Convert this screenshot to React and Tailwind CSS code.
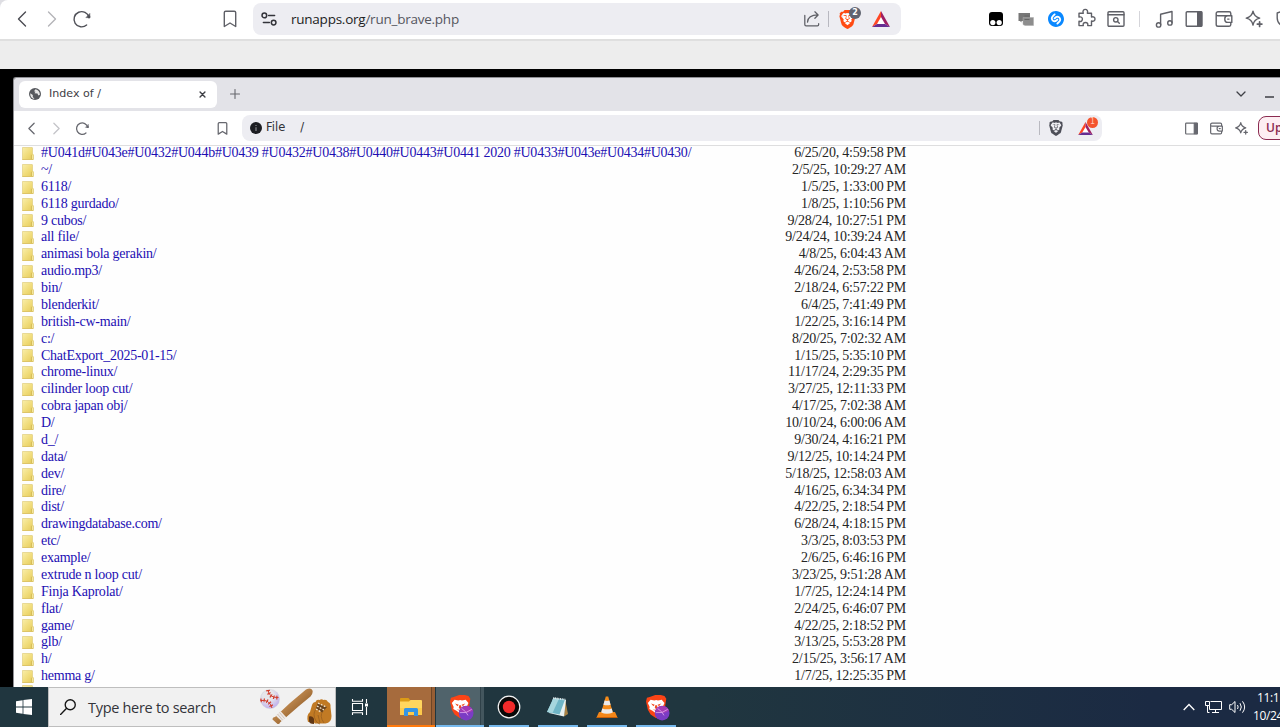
import { SiBrave, SiShazam } from "react-icons/si";

const files = [
  ["#U041d#U043e#U0432#U044b#U0439 #U0432#U0438#U0440#U0443#U0441 2020 #U0433#U043e#U0434#U0430/", "6/25/20, 4:59:58", "PM"],
  ["~/", "2/5/25, 10:29:27", "AM"],
  ["6118/", "1/5/25, 1:33:00", "PM"],
  ["6118 gurdado/", "1/8/25, 1:10:56", "PM"],
  ["9 cubos/", "9/28/24, 10:27:51", "PM"],
  ["all file/", "9/24/24, 10:39:24", "AM"],
  ["animasi bola gerakin/", "4/8/25, 6:04:43", "AM"],
  ["audio.mp3/", "4/26/24, 2:53:58", "PM"],
  ["bin/", "2/18/24, 6:57:22", "PM"],
  ["blenderkit/", "6/4/25, 7:41:49", "PM"],
  ["british-cw-main/", "1/22/25, 3:16:14", "PM"],
  ["c:/", "8/20/25, 7:02:32", "AM"],
  ["ChatExport_2025-01-15/", "1/15/25, 5:35:10", "PM"],
  ["chrome-linux/", "11/17/24, 2:29:35", "PM"],
  ["cilinder loop cut/", "3/27/25, 12:11:33", "PM"],
  ["cobra japan obj/", "4/17/25, 7:02:38", "AM"],
  ["D/", "10/10/24, 6:00:06", "AM"],
  ["d_/", "9/30/24, 4:16:21", "PM"],
  ["data/", "9/12/25, 10:14:24", "PM"],
  ["dev/", "5/18/25, 12:58:03", "AM"],
  ["dire/", "4/16/25, 6:34:34", "PM"],
  ["dist/", "4/22/25, 2:18:54", "PM"],
  ["drawingdatabase.com/", "6/28/24, 4:18:15", "PM"],
  ["etc/", "3/3/25, 8:03:53", "PM"],
  ["example/", "2/6/25, 6:46:16", "PM"],
  ["extrude n loop cut/", "3/23/25, 9:51:28", "AM"],
  ["Finja Kaprolat/", "1/7/25, 12:24:14", "PM"],
  ["flat/", "2/24/25, 6:46:07", "PM"],
  ["game/", "4/22/25, 2:18:52", "PM"],
  ["glb/", "3/13/25, 5:53:28", "PM"],
  ["h/", "2/15/25, 3:56:17", "AM"],
  ["hemma g/", "1/7/25, 12:25:35", "PM"],
];

// Line icon on a 20x20 grid
function Line({ className = "size-5", width = 1.4, children }) {
  return (
    <svg
      viewBox="0 0 20 20"
      className={`shrink-0 ${className}`}
      fill="none"
      stroke="currentColor"
      strokeWidth={width}
      strokeLinecap="round"
      strokeLinejoin="round"
    >
      {children}
    </svg>
  );
}

const Back = (p) => <Line {...p}><path d="M13.5 3 6.5 10l7 7" /></Line>;
const Forward = (p) => <Line {...p}><path d="m6.5 3 7 7-7 7" /></Line>;

const Reload = (p) => (
  <Line {...p}>
    <path d="M14.6 16a7.6 7.6 0 1 1 2.4-7.6" />
    <circle cx="17" cy="8" r="1.4" fill="currentColor" stroke="none" />
    <path d="M17.8 4.8v3.8h-3.5z" fill="currentColor" strokeWidth=".6" />
  </Line>
);

const Bookmark = (p) => (
  <Line {...p}>
    <path d="M4.3 3.600c0-.9.500-1.400 1.400-1.400h8.600c.9 0 1.400.5 1.400 1.400v13.900L10 14l-5.700 3.500z" />
  </Line>
);

const Sidebar = (p) => (
  <Line {...p}>
    <rect x="2.200" y="2.700" width="15.600" height="14.600" rx="1" />
    <path d="M13.700 3h4v14h-4z" fill="currentColor" />
  </Line>
);

const Wallet = (p) => (
  <Line {...p}>
    <path d="M16.800 6.800V4.400c0-1-.6-1.600-1.600-1.600H4A1.800 1.800 0 0 0 2.200 4.600v10.800A1.800 1.800 0 0 0 4 17.200h11.200c1 0 1.600-.6 1.600-1.600v-2.200M2.200 5.200c0 1 .8 1.600 1.800 1.600h13.800v6.600h-4a3 3 0 0 1-3-3v-.6a3 3 0 0 1 3-3" />
    <path d="M13.700 10.100h1.300" />
  </Line>
);

const Sparkle = (p) => (
  <Line {...p}>
    <path d="M9 2.200c.8 4.200 2.400 5.900 6.700 6.900-4.300 1-5.900 2.600-6.700 6.900-.8-4.300-2.500-5.900-6.800-6.900C6.500 8.100 8.200 6.400 9 2.200z" />
    <path d="M15.600 12.800v4.600M13.300 15.100h4.600" strokeWidth="1.700" />
  </Line>
);

function BatTriangle({ className }) {
  return (
    <svg viewBox="0 0 18 16" className={`shrink-0 ${className}`}>
      <path d="M9 3 3 15h12z" fill="#fff" />
      <path d="M9 0 0 16l5-3 4-7z" fill="#ff4724" />
      <path d="M9 0v6l4 7 5 3z" fill="#9e1f63" />
      <path d="M0 16h18l-5-3H5z" fill="#662d91" />
    </svg>
  );
}

function FolderSmall() {
  return (
    <svg viewBox="0 0 12 13" className="h-[13px] w-3 shrink-0">
      <defs>
        <linearGradient id="folder" x2="1" y2="1">
          <stop stopColor="#f9eea9" />
          <stop offset=".55" stopColor="#f0db78" />
          <stop offset="1" stopColor="#e2c95c" />
        </linearGradient>
      </defs>
      <path d="M.4.5h9.700q.4 0 .4.5v6l1 .8V12q0 .6-.6.6H.4z" fill="url(#folder)" stroke="#e0cd7e" strokeWidth=".7" />
      <path d="M9.400 7.800v4.500" stroke="#cfb450" strokeWidth=".7" />
      <path d="M10.500 8.200v3.800" stroke="#fbf0b0" strokeWidth=".7" />
      <path d="M.4 12.500h10.800" stroke="#d8bb55" strokeWidth=".7" />
    </svg>
  );
}

function OuterToolbar() {
  return (
    <div className="flex h-[39px] shrink-0 items-center rounded-tl-lg bg-white pb-px pl-3 text-[#5f6067]">
      <Back className="size-5 text-[#4a4b52]" />
      <Forward className="ml-2.5 size-5 text-[#b4b4b8]" />
      <Reload className="ml-2.5 size-5 text-[#4f5057]" />
      <Bookmark className="ml-[128px] size-5" />
      <div className="ml-[13px] flex h-8 w-[648px] shrink-0 items-center rounded-lg bg-[#ededf2] pr-[11px] pl-2">
        <Line className="size-4 text-[#33343a]" width={1.900}>
          <circle cx="4.200" cy="5.500" r="2.900" />
          <path d="M9.500 5.500H17M3 14.500h7.500" />
          <circle cx="15.800" cy="14.500" r="2.900" />
        </Line>
        <div className="ml-3.5 w-[250px] whitespace-nowrap font-['Open_Sans','Noto_Sans',sans-serif] text-[13.500px] leading-5 tracking-[-0.240px] text-[#1c1d22]">
          runapps.org<span className="text-[#55565e]">/run_brave.php</span>
        </div>
        <Line className="ml-auto size-[18px]">
          <path d="M2 6v10.200c0 .9.500 1.400 1.400 1.400H16c.9 0 1.400-.5 1.400-1.400v-1" />
          <path d="M5 13.500c.3-4.700 3.500-8 11.500-8M13.200 2l3.600 3.500-3.600 3.700" />
        </Line>
        <div className="ml-[7px] h-4 w-px bg-[#b8b8c0]" />
        <div className="relative ml-[9px] size-[19px]">
          <div className="absolute inset-x-[5px] top-1 bottom-1 bg-white" />
          <SiBrave className="relative size-[19px] text-[#ff4b13]" />
          <div className="absolute -top-[3px] left-[11px] flex size-3 items-center justify-center rounded-full bg-[#5f6370] font-['DejaVu_Sans',sans-serif] text-[8px] font-bold text-white">
            2
          </div>
        </div>
        <BatTriangle className="ml-[15px] h-4 w-[18px]" />
      </div>
      <svg viewBox="0 0 14 14" className="ml-[88px] size-3.5 shrink-0">
        <rect width="14" height="14" rx="3" fill="#000" />
        <circle cx="3.800" cy="10.600" r="2.600" fill="#fff" />
        <circle cx="10.200" cy="10.600" r="2.600" fill="#fff" />
      </svg>
      <svg viewBox="0 0 16 14" className="ml-[15px] h-3.5 w-4 shrink-0">
        <path d="M.5 1h11.500v8H3.500v1.500L2 9H.5z" fill="#777" />
        <path d="M5 5.500h10.500v8H7l-2-1z" fill="#8d8d8d" stroke="#aaa" strokeWidth=".5" />
        <path d="M6.500 4h5M6.500 7.500h5" stroke="#666" />
      </svg>
      <SiShazam className="ml-3.5 size-4 shrink-0 text-[#0a88ff]" />
      <Line className="ml-3 size-5 translate-y-[-1px]" width={1.400}>
        <path d="M3 5.200h4.300c-1-2.600.5-3.800 2-3.800s3 1.200 2 3.800h4.200v3.900c2-.8 3.500.2 3.500 1.900s-1.500 2.700-3.500 1.900v4.700h-3.800c.6-2-.5-3.100-2.200-3.100s-2.800 1.100-2.200 3.100H3v-4.300c2.200.6 3.400-.5 3.400-2.200S5.200 8.500 3 9.100z" />
      </Line>
      <Line className="ml-2.5 size-5">
        <rect x="2" y="2.700" width="16" height="14.600" rx="1" />
        <path d="M2 5.800h16" />
        <circle cx="9.800" cy="10.800" r="2.200" />
        <path d="m11.500 12.500 1.800 1.800" />
      </Line>
      <div className="ml-[13px] h-4 w-px shrink-0 bg-[#d5d5da]" />
      <Line className="ml-[14px] size-5">
        <path d="M6.600 15.800V5.200L18 2.500v11.300" />
        <circle cx="4.600" cy="15.900" r="2.200" />
        <circle cx="15.900" cy="13.900" r="2.200" />
      </Line>
      <Sidebar className="ml-2.5 size-5" />
      <Wallet className="ml-2.5 size-5" />
      <Sparkle className="ml-2.5 size-5" />
      <Line className="ml-[11px] size-5">
        <path d="M10 1.500 2.200 4v5c0 4.500 3.300 7.500 7.800 9.500" />
      </Line>
    </div>
  );
}

function InnerTabs() {
  return (
    <div className="flex h-[33px] shrink-0 items-center bg-[#e3e3e8] pb-px pl-[5px] font-['DejaVu_Sans',sans-serif] text-[11.100px] text-[#3f4046]">
      <div className="flex h-[27px] w-[198px] shrink-0 items-center rounded-md bg-white pr-2.5 pl-2.5">
        <svg viewBox="0 0 12 12" className="size-3">
          <circle cx="6" cy="6" r="6" fill="#57595e" />
          <path d="M1.300 5.200 3.800 7v2l1.700 1.800C2.500 10.600 1 8 1.300 5.200zM6.500 1.200 5 3.200l1.500.6-1 1.400 3 .4.800 2 1.600-.8c0-3-1.600-5-4.400-5.600z" fill="#e8e8e8" />
        </svg>
        <span className="ml-2">Index of /</span>
        <Line className="mr-px ml-auto size-[7px]" width={4}>
          <path d="m3 3 14 14M17 3 3 17" />
        </Line>
      </div>
      <Line className="ml-[13px] size-2.5 text-[#66676d]" width={2.200}>
        <path d="M10 1v18M1 10h18" />
      </Line>
      <Line className="ml-[996px] size-2.5" width={2.600}>
        <path d="m2 6 8 8 8-8" />
      </Line>
      <div className="mt-1.5 ml-[19px] h-[1.500px] w-[9px] shrink-0 bg-[#66676d]" />
    </div>
  );
}

function InnerToolbar() {
  return (
    <div className="flex h-[35px] shrink-0 items-center border-b border-[#dededf] bg-white pl-2.5 font-['DejaVu_Sans',sans-serif] text-[#67686f]">
      <Back className="size-[15px]" width={1.700} />
      <Forward className="ml-2.5 size-[15px] text-[#c4c4c8]" width={1.700} />
      <Reload className="ml-[11px] size-[15px]" width={1.700} />
      <Bookmark className="ml-[125px] size-[15px]" width={1.700} />
      <div className="ml-3 flex h-[26px] w-[860px] shrink-0 items-center rounded-lg bg-[#ededf2] pr-2 pl-2 text-[11.500px] text-[#303137]">
        <svg viewBox="0 0 12 12" className="size-3">
          <circle cx="6" cy="6" r="6" fill="#1d1e23" />
          <path d="M6 3v1M6 5.200V9" stroke="#8a8b90" strokeWidth="1.200" />
        </svg>
        <span className="ml-1">File</span>
        <span className="ml-[15px]">/</span>
        <div className="ml-auto h-3.5 w-px bg-[#b9b9c0]" />
        <div className="relative ml-2 size-4">
          <div className="absolute inset-[4px] bg-[#ededf2]" />
          <SiBrave className="relative size-4 text-[#4d4e58]" />
        </div>
        <div className="relative ml-3.5 h-[13px] w-4">
          <BatTriangle className="h-[13px] w-[15px]" />
          <div className="absolute -top-[5px] left-[9px] flex size-[11px] items-center justify-center rounded-full bg-[#f4532d] text-[8px] text-[#ffc9b8]">
            1
          </div>
        </div>
      </div>
      <Sidebar className="ml-[82px] size-[15px]" width={1.600} />
      <Wallet className="ml-2.5 size-[15px]" width={1.600} />
      <Sparkle className="ml-2.5 size-[15px]" width={1.600} />
      <div className="ml-[9px] flex h-6 w-20 shrink-0 items-center rounded-lg border border-[#8b2a50] bg-[#fdeef2] pl-[7px] font-['Open_Sans','Noto_Sans',sans-serif] text-[12px] font-semibold text-[#8b2a50]">
        Update
      </div>
    </div>
  );
}

function Listing() {
  return (
    <div className="min-h-0 flex-1 overflow-hidden bg-[#fefefe] pl-2 font-['Liberation_Serif',serif] text-[14px] leading-[16.890px] tracking-[-0.240px]">
      <div className="-mt-[1px]">
        {files.map(([name, date, half]) => (
          <div key={name} className="flex h-[16.890px] w-[884px] items-center whitespace-nowrap">
            <FolderSmall />
            <span className="ml-[7px] text-[#1d0fb3]">{name}</span>
            <span className="ml-auto tracking-[-0.200px] text-[#252525]">
              {date}
              <span className="ml-[2.500px]">{half}</span>
            </span>
          </div>
        ))}
        <FolderSmall />
      </div>
    </div>
  );
}

function BraveBeta() {
  return (
    <svg viewBox="0 0 26 28" className="h-[26px] w-6">
      <path d="m7 1 3-1h6l4 1 2 3-.5 3L20 17l-3 4-6 4-6-4-3-5L0 7l1-4 3-1z" fill="#fb4416" />
      <path d="m5 5 4 1 2-.7L13 6l4-1 3 3.500-2 4.500.5 2-3.500 2-4 3-4-3-3.500-2 .5-2-2-4.500z" fill="#fff" />
      <path d="m5.500 9 4 1.500L8 12zM16.500 9l-4 1.500L14 12zM10 11h2l.5 3-1.500 1-1.500-1zM7 15l4 1.500L15 15l-4 2.500z" fill="#f14b22" />
      <circle cx="17.500" cy="19.500" r="8" fill="#7b3cc4" />
      <path d="M10 17a8 8 0 0 1 15 0q-7 5-15 0z" fill="#a43bb5" />
      <path d="M10.500 19q7 1.500 13-3.500M12.500 14.500q5 3 7 7.500" stroke="#d99be8" strokeWidth="1" fill="none" />
    </svg>
  );
}

function FileExplorer() {
  return (
    <svg viewBox="0 0 22 20" className="h-5 w-[22px]">
      <path d="M0 2q0-1 1-1h7.500l1.500 2v3H0z" fill="#dc9b16" />
      <path d="M0 4.500h9L10.500 3H21q1 0 1 1v14H0z" fill="#ffd65e" />
      <path d="M0 11h22v7H0z" fill="#fdca4b" />
      <path d="M4 19v-6.500q0-1.500 1.500-1.500h11q1.500 0 1.500 1.500V19h-4v-4H8v4z" fill="#3595e4" />
    </svg>
  );
}

function Recorder() {
  return (
    <svg viewBox="0 0 24 24" className="size-6">
      <circle cx="12" cy="12" r="10.800" fill="#080808" stroke="#f4f4f4" strokeWidth="1.200" />
      <circle cx="12" cy="12" r="6.200" fill="#f22a2a" />
    </svg>
  );
}

function Notepad() {
  return (
    <svg viewBox="0 0 24 24" className="size-6">
      <path d="m19 4 3 15-4 2.500z" fill="#a98245" />
      <path d="M7 3.500 20 5l-2 16.500L3 18z" fill="#e8f1f2" />
      <path d="M7.500 3 19 4.500 13.500 19.500 1 17z" fill="#6fb5c6" />
      <path d="M7.500 3 13 3.700 6.500 18 1 17z" fill="#a6d6de" />
      <path d="M7.300 3 19.500 4.600" stroke="#e3e9eb" strokeWidth="1.800" strokeDasharray="1 .7" />
    </svg>
  );
}

function TrafficCone() {
  return (
    <svg viewBox="0 0 22 24" className="h-6 w-[22px]">
      <path d="M3 17h16l2.500 5.500H.5z" fill="#f48618" />
      <path d="M9.800 1.500h2.400L17 18q-6 2.500-12 0z" fill="#f58b1b" />
      <path d="m8.600 5.500-1.200 4.200q3.600 1.300 7.200 0l-1.200-4.200q-2.400.8-4.800 0zM6.200 13.500l-1 4q5.800 2.500 11.600 0l-1-4q-4.800 1.700-9.600 0z" fill="#eceaea" />
      <path d="M.5 22.500h21" stroke="#c75e09" />
    </svg>
  );
}

function SearchArt() {
  return (
    <svg viewBox="0 0 76 38" className="h-[38px] w-[76px]" fill="none">
      <defs>
        <radialGradient id="ball" cx=".4" cy=".3" r=".8">
          <stop offset=".35" stopColor="#e6e6ea" />
          <stop offset="1" stopColor="#b8a4ee" />
        </radialGradient>
        <linearGradient id="bat" x1="0" x2="1" y1="0" y2="1">
          <stop offset=".3" stopColor="#c99358" />
          <stop offset=".75" stopColor="#8f5b27" />
        </linearGradient>
      </defs>
      <circle cx="11" cy="11" r="9.600" fill="url(#ball)" stroke="#c9c9d2" strokeWidth=".4" />
      <path d="M9 2q1 8 10.500 7.500M1.500 12.500Q10.500 11 13 20" stroke="#d23a28" strokeWidth="1" />
      <path d="M9 2q1 8 10.500 7.500M1.500 12.500Q10.500 11 13 20" stroke="#d23a28" strokeWidth="3.800" strokeDasharray="1.100 2" />
      <path d="M47 1.500q5-2.500 6.500 1 .8 3-2 6L40 18 21 34.500q-.5 2-2.500 1.500l-5-4.500q0-2.500 2.500-2.500L31 15z" fill="url(#bat)" />
      <path d="m16.500 27.500 5-4.500 6 6.500-4.500 4z" fill="#eee9e5" />
      <path d="m18.500 26 5 6M20.500 24.500l5 6" stroke="#b9a89e" strokeWidth=".6" />
      <path d="M49 34q-2-7 2-10l2-7q1-3 3.500-3 1-3 4-2 2-1.500 4 0 3-1 4.500 2 3 1 2.500 5l1 9q0 7-6 7.500H56l-2-2z" fill="#c17a24" />
      <path d="M50 28.500q3-1 5 2v5.500q-5 0-5-3z" fill="#613713" />
      <path d="M57 21q-4 5 0 12 1 2 4 3M64 23q-4 5 1 12M59 27l2 8" stroke="#99601f" strokeWidth=".8" />
      <path d="M58.500 15.500 68 19l-5 5.500-6-4z" fill="#69421a" />
      <path d="m59 15 8 4M58 18l7 4M57 21l5 3" stroke="#f3e6d0" strokeWidth="1.300" strokeDasharray="1.800 1.400" />
    </svg>
  );
}

function TaskButton({ children }) {
  return (
    <div className="ml-[9px] flex h-10 w-10 shrink-0 items-center justify-center border-b-2 border-[#76b9ed] pt-0.5">
      {children}
    </div>
  );
}

function Taskbar() {
  return (
    <div className="flex h-10 shrink-0 items-center overflow-hidden bg-linear-to-r from-[#20363f] from-55% to-[#1b2a43] to-90% font-['Open_Sans','Noto_Sans',sans-serif] text-white">
      <svg viewBox="0 0 16 16" className="ml-4 size-4 shrink-0" fill="#fff">
        <path d="M0 2.200 6.600 1.300v6.300H0zM7.400 1.100 16 0v7.600H7.400zM0 8.400h6.600v6.300L0 13.800zM7.400 8.400H16V16l-8.600-1.100z" />
      </svg>
      <div className="ml-4 flex h-10 w-[288px] shrink-0 items-center border border-[#bebebe] bg-[#f1f1f1] pl-[11px] text-[#33343a]">
        <Line className="size-4 text-[#151515]" width={1.700}>
          <circle cx="12.800" cy="7.200" r="6.300" />
          <path d="m8 11.800-7.300 7.500" />
        </Line>
        <span className="ml-3 w-[130px] whitespace-nowrap pt-px text-[14.500px] tracking-[-0.300px]">Type here to search</span>
        <div className="ml-[42px]">
          <SearchArt />
        </div>
      </div>
      <svg viewBox="0 0 18 16" className="ml-[15px] h-4 w-[18px] shrink-0" fill="none" stroke="#fff" strokeWidth="1.100">
        <path d="M1.500 4.500h10v7h-10zM1.500 0v2.300h10V0M1.500 16v-2.300h10V16M15.500 0v4M15.500 8v8" />
        <path d="M14 4.500h3v3h-3z" fill="#fff" stroke="none" />
      </svg>
      <div className="ml-[18px] flex h-10 w-12 shrink-0 border-b-2 border-[#ff7a0d] bg-[#a66b3d]">
        <div className="flex w-11 items-center justify-center pt-px pl-1">
          <FileExplorer />
        </div>
        <div className="flex-1 border-l border-[#6d4526] bg-[#975e34]" />
      </div>
      <div className="ml-px flex h-10 w-12 shrink-0 border-b-2 border-[#76b9ed] bg-[#50636b]">
        <div className="flex w-11 items-center justify-center pt-1 pl-2">
          <BraveBeta />
        </div>
        <div className="flex-1 border-l border-[#2f4149] bg-[#43565e]" />
      </div>
      <div className="-ml-1 flex">
        <TaskButton><Recorder /></TaskButton>
        <TaskButton><Notepad /></TaskButton>
        <TaskButton><TrafficCone /></TaskButton>
        <div className="ml-[9px] flex h-10 w-10 shrink-0 items-center justify-center border-b-2 border-[#76b9ed] pt-1 pl-1">
          <BraveBeta />
        </div>
      </div>
      <svg viewBox="0 0 12 8" className="ml-auto h-2 w-3 shrink-0" fill="none" stroke="#fff" strokeWidth="1.300">
        <path d="m.7 7 5.300-5.500L11.300 7" />
      </svg>
      <svg viewBox="0 0 17 14" className="ml-2.5 h-3.5 w-[17px] shrink-0" fill="none" stroke="#fff">
        <path d="M5.500 1.500h11v8h-12v-4M10.500 9.500v3M7 12.500h7M.5 1.500h4v4h-4zM2.500 5.500v7H4.500" />
      </svg>
      <svg viewBox="0 0 17 14" className="ml-[7px] h-3.5 w-[17px] shrink-0" fill="none" stroke="#fff">
        <path d="M.7 4.700h2L6 1.500v11L2.700 9.300h-2zM8.500 5q1.300 2 0 4M11 3.200q2.600 3.800 0 7.600M13.500 1.300q4.300 5.700 0 11.400" />
      </svg>
      <div className="ml-[7px] flex w-[27px] shrink-0 flex-col whitespace-nowrap text-[12px] leading-[18px] tracking-[-0.400px]">
        <span className="ml-1">11:11 AM</span>
        <span>10/24/2025</span>
      </div>
    </div>
  );
}

export default function App() {
  return (
    <div className="flex h-[727px] w-[1280px] flex-col overflow-hidden bg-[#dedee3]">
      <OuterToolbar />
      <div className="h-[30px] shrink-0 border-t-2 border-[#dfdfdf] bg-[#ededed]" />
      <div className="flex min-h-0 flex-1 flex-col bg-black pt-2 pl-[13px]">
        <div className="flex min-h-0 flex-1 flex-col overflow-hidden rounded-tl-[3px] border-t border-l border-[#909095]">
          <InnerTabs />
          <InnerToolbar />
          <Listing />
        </div>
      </div>
      <Taskbar />
    </div>
  );
}
